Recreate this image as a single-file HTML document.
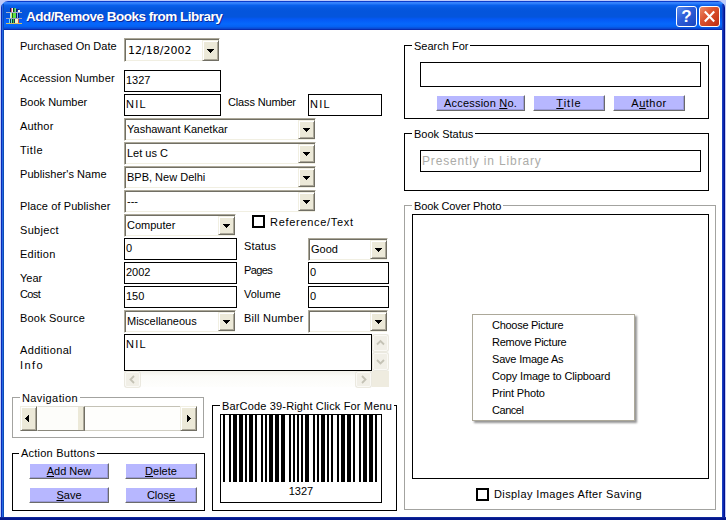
<!DOCTYPE html>
<html><head><meta charset="utf-8"><title>Add/Remove Books from Library</title>
<style>
html,body{margin:0;padding:0;}
body{width:726px;height:520px;position:relative;overflow:hidden;background:#bfcbfa;font-family:"Liberation Sans",sans-serif;font-size:11px;color:#000;}
#win div,#win span{position:absolute;box-sizing:border-box;}
#win{position:absolute;left:1px;top:1px;width:724px;height:519px;background:#fff;overflow:hidden;border-radius:7px 7px 0 0;}
#inner{left:-1px;top:-1px;width:726px;height:520px;}
/* frame */
#tb{left:0;top:1px;width:726px;height:29px;background:linear-gradient(#0a3ccc 0,#0a3ccc 1px,#3a88ff 1px,#2a7af8 3px,#0a62ee 4px,#0558e0 7px,#0455dc 10px,#0455dc 16px,#0458f4 18px,#0668fc 23px,#0560f0 26px,#0a4cd4 27px,#0a48d0 28px,#082cb0 28px,#082cb0 29px);}
#bl{left:1px;top:4px;width:3px;height:516px;background:linear-gradient(90deg,#0a2ab8 0,#0a2ab8 1px,#2468e0 1px,#2468e0 2px,#0c4cb8 2px);}
#br{left:722px;top:4px;width:3px;height:516px;background:linear-gradient(90deg,#1a40c0 0,#1a40c0 1px,#0a28b0 1px,#0a28b0 2px,#04128a 2px);}
#bb{left:1px;top:517px;width:724px;height:3px;background:linear-gradient(#10289a 0,#10289a 1px,#04188c 1px);}
#ttl{left:26px;top:9px;color:#fff;font-weight:bold;font-size:13.5px;line-height:16px;white-space:nowrap;letter-spacing:-.5px;text-shadow:1px 1px 0 #0a2a9a;}
.cbt{width:21px;height:21px;top:6px;border:1px solid #fff;border-radius:3px;}
.lbl{white-space:nowrap;font-size:11px;line-height:14px;}
.tx{border:1px solid #000;background:#fff;}
.tx span,.cb span{left:2px;top:2px;white-space:nowrap;line-height:14px;}
.cb span{top:3px;}
.tx span{left:1px;}
.cb{background:#fff;border:1px solid;border-color:#aca899 #fff #fff #aca899;box-shadow:inset 1px 1px 0 #716f64,inset -1px -1px 0 #f1efe2;}
.dd{width:16px;background:#ece9d8;border:1px solid;border-color:#f1efe2 #716f64 #716f64 #f1efe2;box-shadow:inset 1px 1px 0 #fff,inset -1px -1px 0 #aca899;}
.dd:after{content:"";position:absolute;left:4px;top:7px;width:7px;height:4px;background:linear-gradient(#000,#000) 0 0/7px 1px no-repeat,linear-gradient(#000,#000) 1px 1px/5px 1px no-repeat,linear-gradient(#000,#000) 2px 2px/3px 1px no-repeat,linear-gradient(#000,#000) 3px 3px/1px 1px no-repeat;}
.dd.dp:after{left:4px;top:8px;}
.dd.ar:after{left:4px;top:8px;width:4px;height:7px;background:linear-gradient(#000,#000) 3px 0/1px 7px no-repeat,linear-gradient(#000,#000) 2px 1px/1px 5px no-repeat,linear-gradient(#000,#000) 1px 2px/1px 3px no-repeat,linear-gradient(#000,#000) 0 3px/1px 1px no-repeat;}
.dd.arr:after{left:6px;transform:scaleX(-1);}
.sbb{background:#f1efe7;border:1px solid #faf9f5;border-radius:2px;box-shadow:0 0 0 1px #ebe9e0;}
.sbb svg{display:block;margin:-1px}
.gb{border:1px solid #000;}
.gb>span{background:#fff;left:7px;top:-8px;padding:0 2px;white-space:nowrap;line-height:14px;}
.gbl{border:1px solid #a3a3a0;}
.btn{background:#b7b7ff;border:1px solid;border-color:#fff #6b6b6b #6b6b6b #fff;box-shadow:inset -1px -1px 0 #9a9ad8;text-align:center;line-height:14px;white-space:nowrap;}
.btn u{text-decoration:underline;}
.chk{width:13px;height:13px;border:2px solid #000;background:#fff;}
.mi{left:19px;white-space:nowrap;line-height:14px;}
</style></head><body>
<div style="position:absolute;left:0;top:517px;width:726px;height:3px;background:linear-gradient(#10289a 0,#10289a 1px,#04188c 1px)"></div>
<div id="win"><div id="inner">
<div id="tb"></div><div id="bl"></div><div id="br"></div><div id="bb"></div>
<div id="ico" style="left:6px;top:8px;width:16px;height:16px"><svg width="16" height="16" viewBox="0 0 16 16" shape-rendering="crispEdges"><rect x="4" y="0" width="1" height="4" fill="#1a1a58"/><rect x="5" y="0" width="1" height="4" fill="#f05878"/><rect x="6" y="0" width="1" height="4" fill="#f8f4f4"/><rect x="7" y="0" width="1" height="4" fill="#103818"/><rect x="8" y="0" width="1" height="4" fill="#38b858"/><rect x="9" y="0" width="1" height="4" fill="#78d888"/><rect x="10" y="1" width="1" height="3" fill="#102060"/><rect x="11" y="2" width="1" height="1" fill="#283890"/><rect x="12" y="2" width="2" height="2" fill="#f0f4fc"/><rect x="11" y="1" width="2" height="1" fill="#1a2a80"/><rect x="0" y="4" width="16" height="1" fill="#a8b0c8"/><rect x="4" y="5" width="1" height="5" fill="#a0f0ff"/><rect x="5" y="5" width="1" height="5" fill="#d8e860"/><rect x="6" y="5" width="1" height="5" fill="#186028"/><rect x="7" y="5" width="3" height="5" fill="#60e040"/><rect x="10" y="5" width="1" height="5" fill="#102070"/><rect x="11" y="5" width="1" height="5" fill="#88b8f8"/><rect x="12" y="5" width="1" height="5" fill="#102070"/><rect x="0" y="10" width="16" height="1" fill="#98a0c0"/><rect x="3" y="11" width="1" height="4" fill="#70e0f8"/><rect x="4" y="11" width="1" height="4" fill="#103060"/><rect x="5" y="11" width="1" height="4" fill="#68e8d0"/><rect x="6" y="11" width="1" height="4" fill="#104020"/><rect x="7" y="11" width="1" height="4" fill="#40c050"/><rect x="8" y="11" width="1" height="4" fill="#183058"/><rect x="9" y="11" width="3" height="4" fill="#f4f4c8"/><rect x="12" y="11" width="1" height="4" fill="#e05040"/><rect x="0" y="15" width="16" height="1" fill="#d8c060"/></svg></div>
<div id="ttl">Add/Remove Books from Library</div>
<div class="cbt" style="left:676px;background:linear-gradient(135deg,#5a8cf0 0,#2c5cd8 45%,#1a44be 100%)"><span style="left:0;top:0;width:19px;text-align:center;color:#fff;font-weight:bold;font-size:17px;line-height:19px">?</span></div>
<div class="cbt" style="left:699px;background:linear-gradient(135deg,#ec8a68 0,#dc5430 40%,#c02c10 100%)"><svg width="19" height="19" viewBox="0 0 19 19" style="display:block"><path d="M4.8 4.6 L14.2 14.4 M14.2 4.6 L4.8 14.4" stroke="#fff" stroke-width="2.1" stroke-linecap="butt"/></svg></div>

<!-- left column labels -->
<div class="lbl" style="left:20px;top:39px">Purchased On Date</div>
<div class="lbl" style="left:20px;top:71px;letter-spacing:0.15px">Accession Number</div>
<div class="lbl" style="left:20px;top:95px">Book Number</div>
<div class="lbl" style="left:20px;top:119px;letter-spacing:0.18px">Author</div>
<div class="lbl" style="left:20px;top:143px;letter-spacing:0.56px">Title</div>
<div class="lbl" style="left:20px;top:167px;letter-spacing:0.05px">Publisher's Name</div>
<div class="lbl" style="left:20px;top:199px;letter-spacing:0.1px">Place of Publisher</div>
<div class="lbl" style="left:20px;top:223px;letter-spacing:0.32px">Subject</div>
<div class="lbl" style="left:20px;top:247px;letter-spacing:0.28px">Edition</div>
<div class="lbl" style="left:20px;top:271px">Year</div>
<div class="lbl" style="left:20px;top:287px;letter-spacing:-0.6px">Cost</div>
<div class="lbl" style="left:20px;top:311px;letter-spacing:.19px">Book Source</div>
<div class="lbl" style="left:20px;top:343px;letter-spacing:0.36px">Additional</div>
<div class="lbl" style="left:20px;top:358px;letter-spacing:1.41px">Info</div>
<div class="lbl" style="left:228px;top:95px;letter-spacing:-.15px">Class Number</div>
<div class="lbl" style="left:270px;top:215px;letter-spacing:.7px">Reference/Text</div>
<div class="lbl" style="left:244px;top:239px;letter-spacing:.15px">Status</div>
<div class="lbl" style="left:244px;top:263px;letter-spacing:-.6px">Pages</div>
<div class="lbl" style="left:244px;top:287px">Volume</div>
<div class="lbl" style="left:244px;top:311px;letter-spacing:.25px">Bill Number</div>

<!-- date -->
<div class="cb" style="left:124px;top:38px;width:96px;height:24px"><span style="font-family:'DejaVu Sans',sans-serif;top:5px;left:3px">12/18/2002</span><div class="dd dp" style="left:77px;top:1px;width:17px;height:21px"></div></div>
<div class="tx" style="left:124px;top:70px;width:97px;height:22px"><span>1327</span></div>
<div class="tx" style="left:124px;top:94px;width:97px;height:22px"><span style="letter-spacing:1.2px">NIL</span></div>
<div class="tx" style="left:308px;top:94px;width:74px;height:22px"><span style="letter-spacing:1.2px">NIL</span></div>
<div class="cb" style="left:124px;top:118px;width:192px;height:23px"><span>Yashawant Kanetkar</span><div class="dd" style="right:0;top:1px;width:17px;height:19px"></div></div>
<div class="cb" style="left:124px;top:142px;width:192px;height:23px"><span>Let us C</span><div class="dd" style="right:0;top:1px;width:17px;height:19px"></div></div>
<div class="cb" style="left:124px;top:166px;width:192px;height:23px"><span>BPB, New Delhi</span><div class="dd" style="right:0;top:1px;width:17px;height:19px"></div></div>
<div class="cb" style="left:124px;top:190px;width:192px;height:23px"><span>---</span><div class="dd" style="right:0;top:1px;width:17px;height:19px"></div></div>
<div class="cb" style="left:124px;top:214px;width:112px;height:23px"><span>Computer</span><div class="dd" style="right:0;top:1px;width:17px;height:19px"></div></div>
<div class="chk" style="left:252px;top:215px"></div>
<div class="tx" style="left:124px;top:238px;width:113px;height:22px"><span>0</span></div>
<div class="cb" style="left:308px;top:238px;width:80px;height:23px"><span>Good</span><div class="dd" style="right:0;top:1px;width:17px;height:19px"></div></div>
<div class="tx" style="left:124px;top:262px;width:113px;height:22px"><span>2002</span></div>
<div class="tx" style="left:308px;top:262px;width:81px;height:22px"><span>0</span></div>
<div class="tx" style="left:124px;top:286px;width:113px;height:22px"><span>150</span></div>
<div class="tx" style="left:308px;top:286px;width:81px;height:22px"><span>0</span></div>
<div class="cb" style="left:124px;top:310px;width:112px;height:23px"><span>Miscellaneous</span><div class="dd" style="right:0;top:1px;width:17px;height:19px"></div></div>
<div class="cb" style="left:308px;top:310px;width:80px;height:23px"><span></span><div class="dd" style="right:0;top:1px;width:17px;height:19px"></div></div>
<!-- textarea -->
<div class="tx" style="left:124px;top:334px;width:248px;height:37px"><span style="letter-spacing:1.2px">NIL</span></div>
<div style="left:372px;top:334px;width:17px;height:37px;background:#fcfcfa"></div>
<div class="sbb" style="left:373px;top:335px;width:15px;height:16px"><svg width="15" height="16" viewBox="0 0 15 16"><path d="M4 9.5 L7.5 6 L11 9.5" fill="none" stroke="#c4c2b5" stroke-width="1.8"/></svg></div>
<div class="sbb" style="left:373px;top:353px;width:15px;height:17px"><svg width="15" height="17" viewBox="0 0 15 17"><path d="M4 7 L7.5 10.5 L11 7" fill="none" stroke="#c4c2b5" stroke-width="1.8"/></svg></div>
<div style="left:124px;top:371px;width:248px;height:16px;background:linear-gradient(#f1f0ea,#fbfbf8 5px,#fefefd)"></div>
<div class="sbb" style="left:125px;top:372px;width:15px;height:15px"><svg width="15" height="15" viewBox="0 0 15 15"><path d="M9 4 L5.5 7.5 L9 11" fill="none" stroke="#c4c2b5" stroke-width="1.8"/></svg></div>
<div class="sbb" style="left:356px;top:372px;width:15px;height:15px"><svg width="15" height="15" viewBox="0 0 15 15"><path d="M6 4 L9.5 7.5 L6 11" fill="none" stroke="#c4c2b5" stroke-width="1.8"/></svg></div>
<div style="left:372px;top:371px;width:17px;height:16px;background:#efece0"></div>

<!-- navigation -->
<div class="gbl" style="left:12px;top:397px;width:192px;height:41px"><span class="lbl" style="left:7px;top:-7px;background:#fff;padding:0 2px;letter-spacing:.4px">Navigation</span></div>
<div style="left:20px;top:406px;width:177px;height:25px;background:#fefefc;border-top:1px solid #c4c2b6;border-bottom:1px solid #d0cec2"></div>
<div class="dd ar al" style="left:20px;top:406px;width:17px;height:25px"></div>
<div class="dd ar arr" style="left:180px;top:406px;width:17px;height:25px"></div>
<div style="left:37px;top:406px;width:48px;height:25px;background:#fdfdfa;border:1px solid;border-color:#e2e0d6 #716f64 #8a887c #fdfdfa"><div style="right:0;top:0;width:6px;height:23px;background:#ece9d8;border-right:1px solid #aca899"></div></div>

<!-- action buttons -->
<div class="gb" style="left:12px;top:453px;width:193px;height:58px"><span style="left:6px;letter-spacing:.23px">Action Buttons</span></div>
<div class="btn" style="left:29px;top:463px;width:80px;height:16px"><u>A</u>dd New</div>
<div class="btn" style="left:125px;top:463px;width:72px;height:16px"><u>D</u>elete</div>
<div class="btn" style="left:29px;top:487px;width:80px;height:16px"><u>S</u>ave</div>
<div class="btn" style="left:125px;top:487px;width:72px;height:16px">Clos<u>e</u></div>

<!-- barcode -->
<div class="gb" style="left:212px;top:405px;width:185px;height:106px"><span style="letter-spacing:.16px;top:-7px">BarCode 39-Right Click For Menu</span></div>
<div id="bc" style="left:220px;top:414px;width:162px;height:89px;border:1px solid #000;"><div style="left:2px;top:0;width:154px;height:67px"><svg width="154" height="67" viewBox="0 0 154 67" shape-rendering="crispEdges" style="display:block"><rect x="0" y="0" width="2" height="67"/><rect x="6" y="0" width="2" height="67"/><rect x="10" y="0" width="4" height="67"/><rect x="16" y="0" width="4" height="67"/><rect x="22" y="0" width="2" height="67"/><rect x="26" y="0" width="4" height="67"/><rect x="32" y="0" width="2" height="67"/><rect x="38" y="0" width="2" height="67"/><rect x="42" y="0" width="2" height="67"/><rect x="46" y="0" width="4" height="67"/><rect x="52" y="0" width="4" height="67"/><rect x="58" y="0" width="4" height="67"/><rect x="66" y="0" width="2" height="67"/><rect x="70" y="0" width="2" height="67"/><rect x="74" y="0" width="2" height="67"/><rect x="78" y="0" width="2" height="67"/><rect x="82" y="0" width="4" height="67"/><rect x="90" y="0" width="2" height="67"/><rect x="94" y="0" width="2" height="67"/><rect x="98" y="0" width="4" height="67"/><rect x="104" y="0" width="2" height="67"/><rect x="108" y="0" width="2" height="67"/><rect x="114" y="0" width="2" height="67"/><rect x="118" y="0" width="4" height="67"/><rect x="124" y="0" width="4" height="67"/><rect x="130" y="0" width="2" height="67"/><rect x="136" y="0" width="2" height="67"/><rect x="140" y="0" width="4" height="67"/><rect x="146" y="0" width="4" height="67"/><rect x="152" y="0" width="2" height="67"/></svg></div><span class="lbl" style="left:0;width:160px;text-align:center;top:69px">1327</span></div>

<!-- search -->
<div class="gb" style="left:404px;top:45px;width:305px;height:74px"><span style="top:-7px">Search For</span></div>
<div class="tx" style="left:420px;top:62px;width:281px;height:25px"></div>
<div class="btn" style="left:436px;top:95px;width:89px;height:16px;letter-spacing:.2px">Accession <u>N</u>o.</div>
<div class="btn" style="left:533px;top:95px;width:72px;height:16px;letter-spacing:1px"><u>T</u>itle</div>
<div class="btn" style="left:613px;top:95px;width:72px;height:16px;letter-spacing:.5px">A<u>u</u>thor</div>

<!-- status -->
<div class="gb" style="left:404px;top:133px;width:305px;height:58px"><span style="top:-7px">Book Status</span></div>
<div class="tx" style="left:420px;top:150px;width:281px;height:22px"><span style="color:#acaca8;font-size:12px;letter-spacing:.85px;top:3px">Presently in Library</span></div>

<!-- photo -->
<div class="gbl" style="left:404px;top:205px;width:312px;height:305px"><span class="lbl" style="left:7px;top:-7px;background:#fff;padding:0 2px;letter-spacing:-.13px">Book Cover Photo</span></div>
<div style="left:412px;top:214px;width:297px;height:265px;border:1px solid #000"></div>
<div class="chk" style="left:476px;top:488px"></div>
<div class="lbl" style="left:494px;top:487px;letter-spacing:.39px">Display Images After Saving</div>

<!-- context menu -->
<div id="cm" style="left:472px;top:314px;width:163px;height:107px;background:#fff;border:1px solid #aca899;box-shadow:2px 2px 2px rgba(0,0,0,.42)">
<div class="mi" style="top:3px;letter-spacing:-.28px">Choose Picture</div>
<div class="mi" style="top:20px;letter-spacing:-.27px">Remove Picture</div>
<div class="mi" style="top:37px;letter-spacing:-.2px">Save Image As</div>
<div class="mi" style="top:54px;letter-spacing:-.15px">Copy Image to Clipboard</div>
<div class="mi" style="top:71px;letter-spacing:-.15px">Print Photo</div>
<div class="mi" style="top:88px;letter-spacing:-.46px">Cancel</div>
</div>
</div></div>
</body></html>
